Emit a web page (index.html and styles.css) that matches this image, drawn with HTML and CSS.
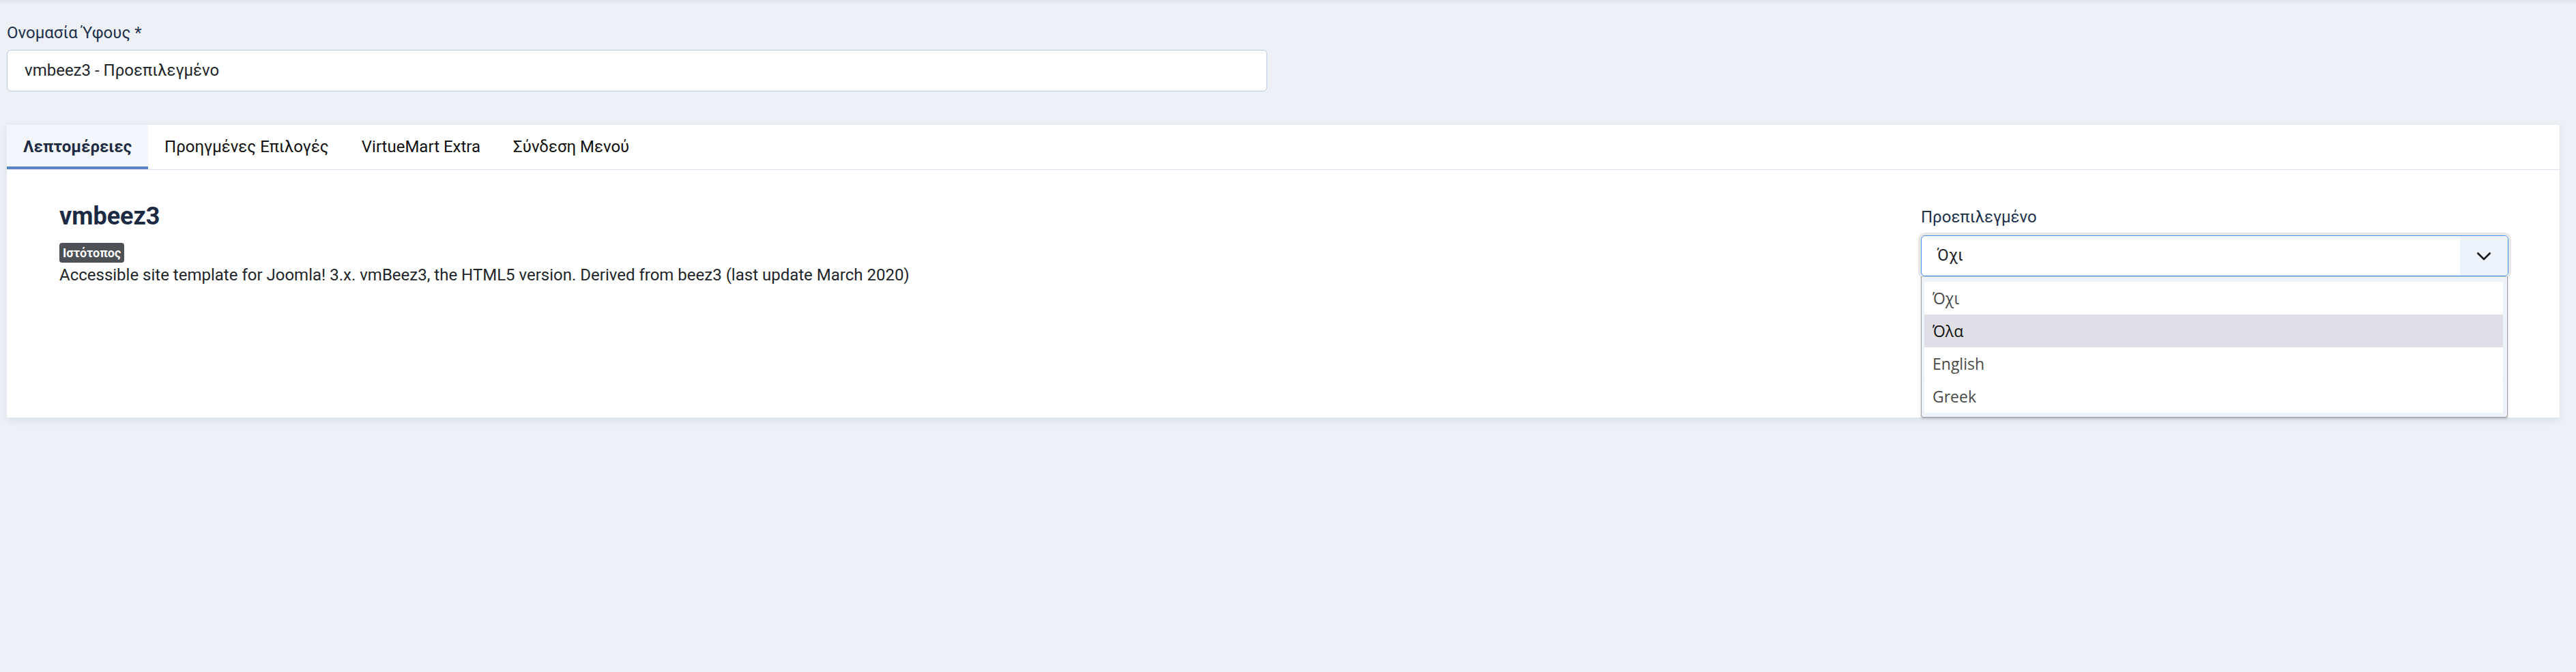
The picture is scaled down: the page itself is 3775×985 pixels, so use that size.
FILE: index.html
```html
<!DOCTYPE html>
<html lang="el">
<head>
<meta charset="utf-8">
<title>vmbeez3</title>
<link rel="stylesheet" href="styles.css">
</head>
<body>
<div class="page">
  <div class="field">
    <label class="lbl">Ονομασία Ύφους *</label>
    <div class="input">vmbeez3 - Προεπιλεγμένο</div>
  </div>

  <div class="card">
    <div class="tabs">
      <div class="tab active">Λεπτομέρειες</div>
      <div class="tab">Προηγμένες Επιλογές</div>
      <div class="tab">VirtueMart Extra</div>
      <div class="tab">Σύνδεση Μενού</div>
    </div>
    <div class="card-body">
      <div class="info">
        <h2 class="title">vmbeez3</h2>
        <span class="badge">Ιστότοπος</span>
        <p class="desc">Accessible site template for Joomla! 3.x. vmBeez3, the HTML5 version. Derived from beez3 (last update March 2020)</p>
      </div>
      <div class="side">
        <label class="lbl side-lbl">Προεπιλεγμένο</label>
        <div class="select-wrap">
          <div class="select">
            <span class="select-val">Όχι</span>
            <span class="arrow"><svg width="22" height="13" viewBox="0 0 22 13"><polyline points="1.5,1.5 11,11 20.5,1.5" fill="none" stroke="#111" stroke-width="2.6"/></svg></span>
          </div>
          <ul class="dropdown">
            <li class="opt">Όχι</li>
            <li class="opt hl">Όλα</li>
            <li class="opt">English</li>
            <li class="opt">Greek</li>
          </ul>
        </div>
      </div>
    </div>
  </div>
</div>
</body>
</html>
```

FILE: styles.css
```css
* { box-sizing: border-box; }
html, body { margin: 0; padding: 0; }
body {
  width: 3775px;
  height: 985px;
  background: #edf1f6;
  background-image: linear-gradient(to bottom, #dde3ec 0, #edf1f6 6px);
  font-family: Roboto, "Noto Sans", sans-serif;
  color: #22262a;
  overflow: hidden;
}
.page {
  padding: 30px 24px 0 10px;
}
.field {
  display: flex;
  flex-direction: column;
  gap: 7px;
}
.lbl {
  display: block;
  font-size: 24px;
  line-height: 36px;
  color: #22324d;
}
.input {
  width: 1847px;
  height: 61px;
  border: 1px solid #b9c7dd;
  border-radius: 6px;
  background: #fff;
  font-size: 24px;
  line-height: 59px;
  padding-left: 25px;
  color: #22262a;
}
.card {
  margin-top: 49px;
  background: #fff;
  height: 429px;
  box-shadow: 0 4px 12px rgba(120, 140, 170, 0.18);
  border-radius: 2px;
}
.tabs {
  display: flex;
  border-bottom: 1px solid #dce3f0;
}
.tab {
  height: 65px;
  padding: 0 24px;
  font-size: 24px;
  line-height: 65px;
  color: #111;
}
.tab.active {
  background: #f3f6fa;
  font-weight: 700;
  color: #1f2d44;
  box-shadow: inset 0 -4px 0 #5a86c5;
}
.card-body {
  display: flex;
  justify-content: space-between;
  padding: 47px 75px 0 77px;
}
.title {
  margin: 0;
  font-size: 36px;
  line-height: 43px;
  font-weight: 700;
  color: #1c2a44;
}
.badge {
  display: inline-block;
  margin-top: 17px;
  height: 29px;
  padding: 0 5px;
  background: #4d5156;
  color: #fff;
  font-weight: 700;
  font-size: 18px;
  line-height: 29px;
  border-radius: 4px;
}
.desc {
  margin: 0;
  font-size: 24px;
  line-height: 36px;
  color: #22262a;
}
.side {
  width: 861px;
  padding-top: 4px;
}
.side-lbl {
  margin-bottom: 9px;
}
.select-wrap {
  position: relative;
}
.select {
  display: flex;
  align-items: stretch;
  height: 60px;
  border: 1.5px solid #3f8ef0;
  border-radius: 6px;
  background: #fff;
  box-shadow: 0 0 0 4px #e7e7e7;
  overflow: hidden;
}
.select-val {
  flex: 1;
  padding-left: 23px;
  font-size: 24px;
  line-height: 57px;
  color: #22262a;
}
.arrow {
  width: 70px;
  background: #eef3fb;
  display: flex;
  align-items: center;
  justify-content: center;
}
.dropdown {
  position: absolute;
  left: 0;
  right: 1px;
  top: 60px;
  margin: 0;
  padding: 7px 6px 6px 4px;
  list-style: none;
  background: #eef3fa;
  border: 1px solid #9d9d9d;
  border-top-color: #c9c9c9;
  border-radius: 0 0 4px 4px;
  box-shadow: 0 2px 3px rgba(0,0,0,0.18);
}
.opt {
  height: 48px;
  padding-left: 12px;
  font-family: "Open Sans", "Noto Sans", sans-serif;
  font-size: 23px;
  line-height: 48px;
  color: #4a4a4a;
  background: #fff;
  border-radius: 3px;
}
.opt.hl {
  background: #e0dfe5;
  color: #111;
}
```
